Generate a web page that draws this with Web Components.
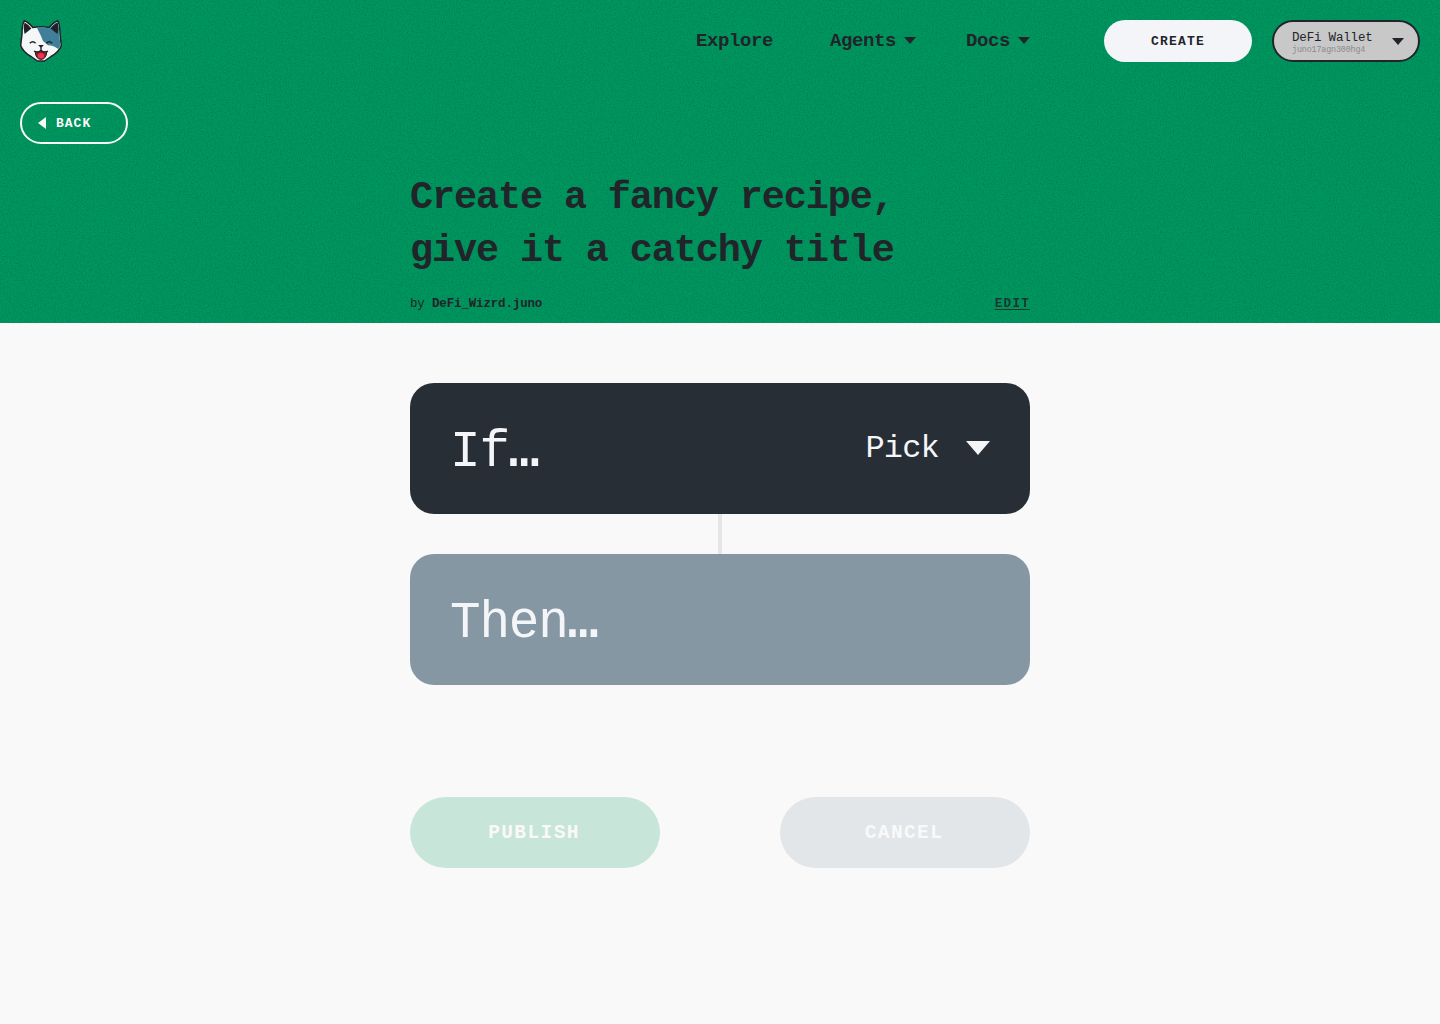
<!DOCTYPE html>
<html lang="en">
<head>
<meta charset="utf-8">
<title>Create recipe</title>
<style>
body{margin:0;background:#f9f9f9;color:#212529;font-family:"Liberation Mono",monospace}
</style>
</head>
<body>
<recipe-page></recipe-page>
<script>
const define = (name, html) => customElements.define(name, class extends HTMLElement {
  constructor() {
    super();
    const t = document.createElement('template');
    t.innerHTML = html;
    this.attachShadow({ mode: 'open' }).append(t.content.cloneNode(true));
  }
});

define('caret-icon', `<style>:host{display:block;flex:none;width:12px;height:7px;margin-bottom:2px}svg{display:block;width:100%;height:100%}</style>
<svg viewBox="0 0 24 14" preserveAspectRatio="none"><path d="M0 0H24L12 14Z" fill="currentColor"/></svg>`);

define('cat-logo', `<style>:host{display:block;width:42px;height:42px}svg{display:block}</style>
<svg width="42" height="42" viewBox="0 0 42 42">
<path d="M4.2 .8Q8 2 12.8 7.4Q21 6 29.2 7.4Q34 2 37.8 .8Q40 5 40 14L41.3 25.5Q39 32 31 36.5L24.5 41H17.5L11 36.5Q3 32 .7 25.5L2 14Q2 5 4.2 .8Z" fill="#f5f6f8" stroke="#202226" stroke-width="1.5" stroke-linejoin="round"/>
<path d="M16.8 7.5Q23 6.8 29.2 8.2L37.3 2Q39.3 6 39.2 14L40.4 25.5 38.2 29Q34 25.5 28 25.3L23 21 21 16Z" fill="#3f7f9a"/>
<path d="M4.6 2.4Q8 4 11.4 8.4L4.6 14Q3 7 4.6 2.4ZM37.4 2.4Q34 4 30.6 8.4L37.4 14Q39 7 37.4 2.4Z" fill="#202226"/>
<path d="M9.8 23.2Q12.8 20.2 15.6 23.2M26.4 23.2Q29.2 20.2 32.2 23.2M14 31.2Q18 33 21 30.2Q24 33 28 31.2M21 27.5V31" fill="none" stroke="#202226" stroke-width="1.4"/>
<path d="M18.2 25H23.8L21 28.3Z" fill="#202226"/>
<path d="M15.2 32Q19 33 21 31Q23 33 26.8 32Q26.2 39.2 21 39.4Q15.8 39.2 15.2 32Z" fill="#a3142a" stroke="#202226"/>
<ellipse cx="21" cy="35.8" rx="3.2" ry="2.7" fill="#f0354a"/>
</svg>`);

define('grain-layer', `<style>:host{display:block;overflow:hidden}svg{display:block;width:100%;height:100%}</style>
<svg><filter id="g" x="0" y="0" width="100%" height="100%" color-interpolation-filters="sRGB"><feTurbulence type="fractalNoise" baseFrequency=".71" numOctaves="3" seed="4"/><feColorMatrix values="0 0 0 0 0  0 0 0 0 .48  0 0 0 0 .36  1.7 0 0 0 -.68"/></filter><rect width="100%" height="100%" filter="url(#g)"/></svg>`);

define('nav-link', `<style>:host{display:flex;align-items:center;gap:8px;font-weight:700;font-size:19px;letter-spacing:-.4px;line-height:42px}</style><slot></slot><slot name="icon"></slot>`);

define('pill-button', `<style>:host{display:flex;box-sizing:border-box;align-items:center;justify-content:center;border-radius:36px;font-weight:700;font-size:13px;letter-spacing:1.2px;line-height:1}</style><slot></slot>`);

define('wallet-button', `<style>
:host{display:flex;box-sizing:border-box;width:148px;height:42px;border:2px solid #212529;border-radius:21px;background:#c8c8c8;align-items:center;justify-content:space-between;padding:3px 14px 0 18px}
.n{font-size:12.5px;letter-spacing:-.18px;line-height:14px}.a{font-size:8.4px;letter-spacing:-.15px;line-height:10px;color:#8b8b8b}caret-icon{margin-bottom:3px}
</style><div><div class="n">DeFi Wallet</div><div class="a">juno17agn300hg4</div></div><caret-icon></caret-icon>`);

define('top-bar', `<style>
:host{display:flex;padding:20px 20px 0;height:42px;justify-content:space-between}
.right,nav{display:flex}nav{margin-right:74px}
.agents{margin-left:57px}.docs{margin-left:50px}
.create{width:148px;height:42px;background:#f4f5f8;margin-right:20px}
</style><cat-logo></cat-logo><div class="right"><nav><nav-link>Explore</nav-link><nav-link class="agents">Agents<caret-icon slot="icon"></caret-icon></nav-link><nav-link class="docs">Docs<caret-icon slot="icon"></caret-icon></nav-link></nav><pill-button class="create">CREATE</pill-button><wallet-button></wallet-button></div>`);

define('recipe-hero', `<style>
:host{display:grid;height:323px;background:#00975d}
grain-layer,.content{grid-area:1/1;min-width:0}
.content{z-index:1}
.back{width:108px;height:42px;margin:40px 0 0 20px;border:2px solid #f8f9fa;border-radius:21px;color:#f8f9fa;justify-content:flex-start;padding-left:16px;letter-spacing:1px}
.back svg{margin:0 10px 1px 0}
.title{width:620px;margin:28px auto 0}
h1{margin:0;font-size:38.5px;letter-spacing:-1.12px;line-height:53px;font-weight:700}
.meta{display:flex;justify-content:space-between;margin-top:18px;font-size:12.5px;letter-spacing:-.16px;line-height:16px}
.edit{letter-spacing:1.3px;text-decoration:underline;text-underline-offset:2px;opacity:.85;font-weight:700}
</style><grain-layer></grain-layer><div class="content"><top-bar></top-bar>
<pill-button class="back"><svg width="8" height="12" viewBox="0 0 8 12"><path d="M8 0V12L0 6Z" fill="currentColor"/></svg>BACK</pill-button>
<div class="title"><h1>Create a fancy recipe,<br>give it a catchy title</h1><div class="meta"><span>by <b>DeFi_Wizrd.juno</b></span><span class="edit">EDIT</span></div></div></div>`);

define('step-card', `<style>
:host{display:flex;box-sizing:border-box;height:131px;padding:0 40px;border-radius:24px;align-items:center;justify-content:space-between;color:#f4f5f8;font-size:51px;letter-spacing:-1.2px}
.label{padding-top:7px}
.pick{display:flex;align-items:center;gap:27px}
::slotted([slot=pick]){font-size:32px;letter-spacing:-.8px}
::slotted(b){letter-spacing:-1.8px}
</style><div class="label"><slot></slot></div><div class="pick"><slot name="pick"></slot><slot name="icon"></slot></div>`);

define('recipe-page', `<style>
:host{display:block;min-height:1024px}
main{width:620px;margin:60px auto 0}
.if{background:#272e36}.then{background:#8597a3}
.big{width:24px;height:14px}
.link{width:4px;height:40px;margin:auto;background:#e5e6ea}
.actions{display:flex;justify-content:space-between;margin-top:112px}
.actions pill-button{width:250px;height:71px;font-size:19.5px;letter-spacing:1.4px;color:#f9f9f9;padding:2px 2px 0 0}
.pub{background:#c7e5d9}.cancel{background:#e2e6e9}
</style><recipe-hero></recipe-hero><main>
<step-card class="if">If<b>…</b><span slot="pick">Pick</span><caret-icon class="big" slot="icon"></caret-icon></step-card>
<div class="link"></div><step-card class="then">Then<b>…</b></step-card>
<div class="actions"><pill-button class="pub">PUBLISH</pill-button><pill-button class="cancel">CANCEL</pill-button></div></main>`);
</script>
</body>
</html>
